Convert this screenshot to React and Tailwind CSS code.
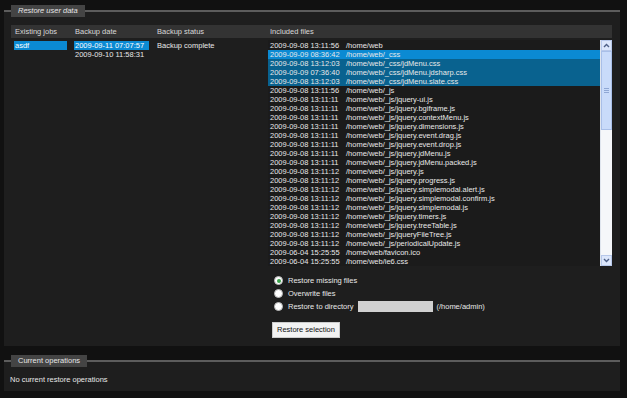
import React from "react";

const files = [
  ["2009-09-08 13:11:56", "/home/web"],
  ["2009-09-09 08:36:42", "/home/web/_css"],
  ["2009-09-08 13:12:03", "/home/web/_css/jdMenu.css"],
  ["2009-09-09 07:36:40", "/home/web/_css/jdMenu.jdsharp.css"],
  ["2009-09-08 13:12:03", "/home/web/_css/jdMenu.slate.css"],
  ["2009-09-08 13:11:56", "/home/web/_js"],
  ["2009-09-08 13:11:11", "/home/web/_js/jquery-ui.js"],
  ["2009-09-08 13:11:11", "/home/web/_js/jquery.bgiframe.js"],
  ["2009-09-08 13:11:11", "/home/web/_js/jquery.contextMenu.js"],
  ["2009-09-08 13:11:11", "/home/web/_js/jquery.dimensions.js"],
  ["2009-09-08 13:11:11", "/home/web/_js/jquery.event.drag.js"],
  ["2009-09-08 13:11:11", "/home/web/_js/jquery.event.drop.js"],
  ["2009-09-08 13:11:11", "/home/web/_js/jquery.jdMenu.js"],
  ["2009-09-08 13:11:11", "/home/web/_js/jquery.jdMenu.packed.js"],
  ["2009-09-08 13:11:12", "/home/web/_js/jquery.js"],
  ["2009-09-08 13:11:12", "/home/web/_js/jquery.progress.js"],
  ["2009-09-08 13:11:12", "/home/web/_js/jquery.simplemodal.alert.js"],
  ["2009-09-08 13:11:12", "/home/web/_js/jquery.simplemodal.confirm.js"],
  ["2009-09-08 13:11:12", "/home/web/_js/jquery.simplemodal.js"],
  ["2009-09-08 13:11:12", "/home/web/_js/jquery.timers.js"],
  ["2009-09-08 13:11:12", "/home/web/_js/jquery.treeTable.js"],
  ["2009-09-08 13:11:12", "/home/web/_js/jqueryFileTree.js"],
  ["2009-09-08 13:11:12", "/home/web/_js/periodicalUpdate.js"],
  ["2009-06-04 15:25:55", "/home/web/favicon.ico"],
  ["2009-06-04 15:25:55", "/home/web/ie6.css"],
];

const Legend = ({ title, italic }) => (
  <div className="flex items-center h-[12px] bg-[linear-gradient(to_bottom,transparent_7px,#1e1e1e_7px)]">
    <div className="w-[7px] h-[2px] bg-[#5c5c5c]" />
    <div
      className={`h-[12px] px-[7px] bg-[#444] text-[#e6e6e6] leading-[12px] ${italic ? "italic" : ""}`}
    >
      {title}
    </div>
    <div className="flex-1 h-[2px] bg-[#5c5c5c]" />
  </div>
);

const Radio = ({ checked, children }) => (
  <div className="flex items-center h-[13px]">
    <span className="w-[9px] h-[9px] rounded-full bg-white border border-[#b8b8b8] flex items-center justify-center ml-[6px] mr-[5px]">
      {checked && <span className="w-[4px] h-[4px] rounded-full bg-[#3aa24a]" />}
    </span>
    {children}
  </div>
);

const Arrow = ({ up }) => (
  <div className="h-[11px] flex items-center justify-center bg-[#dbe6fb] border border-[#b7c8ea]">
    <svg width="7" height="5" viewBox="0 0 7 5">
      <path
        d={up ? "M1 4 L3.5 1.5 L6 4" : "M1 1 L3.5 3.5 L6 1"}
        fill="none"
        stroke="#4d5f86"
        strokeWidth="1.4"
      />
    </svg>
  </div>
);

export default function App() {
  return (
    <div
      className="w-[627px] h-[398px] bg-[#111] pt-[5px] text-[7.5px] text-[#e8e8e8]"
      style={{ fontFamily: "'Liberation Sans', Arial, sans-serif" }}
    >
      <div className="ml-[4px] w-[616px]">
        <Legend title="Restore user data" italic />
        <div className="bg-[#1e1e1e] h-[329px] pt-[8px] pl-[7px] pr-[8px]">
          <div className="flex h-[13px] bg-[#333] text-[#d8d8d8] leading-[13px]">
            <div className="w-[60px] pl-[4px]">Existing jobs</div>
            <div className="w-[82px] pl-[4px]">Backup date</div>
            <div className="w-[113px] pl-[4px]">Backup status</div>
            <div className="flex-1 pl-[4px]">Included files</div>
          </div>
          <div className="flex pt-[2px] leading-[9px]">
            <div className="w-[60px] pl-[3px] pt-[1px]">
              <div className="w-[53px] pl-[1px] bg-[#0b8ad3] text-white">asdf</div>
            </div>
            <div className="w-[82px] pl-[3px] pt-[1px]">
              <div className="w-[75px] pl-[1px] bg-[#0b8ad3] text-white">2009-09-11 07:07:57</div>
              <div className="pl-[1px]">2009-09-10 11:58:31</div>
            </div>
            <div className="w-[113px] pl-[4px] pt-[1px]">Backup complete</div>
            <div className="flex-1 pl-[2px]">
              <div className="flex h-[226px] bg-[#1b1b1b]">
                <div className="flex-1 pt-[1px]">
                  {files.map(([d, p], i) => (
                    <div
                      key={i}
                      className={`flex h-[9px] ${
                        i === 1 ? "bg-[#0b8ad3]" : i > 1 && i < 5 ? "bg-[#09628f]" : ""
                      }`}
                    >
                      <span className="w-[78px] pl-[2px]">{d}</span>
                      <span>{p}</span>
                    </div>
                  ))}
                </div>
                <div className="w-[12px] flex flex-col bg-[#f5f7fa] border-l border-[#dfe5ee]">
                  <Arrow up />
                  <div className="h-[79px] bg-[#c9dbfa] border border-[#a9bfe8] flex items-center justify-center">
                    <div className="w-[5px] flex flex-col gap-[1px]">
                      <div className="h-[1px] bg-[#8fa7d4]" />
                      <div className="h-[1px] bg-[#8fa7d4]" />
                      <div className="h-[1px] bg-[#8fa7d4]" />
                    </div>
                  </div>
                  <div className="flex-1" />
                  <Arrow />
                </div>
              </div>
              <div className="pt-[8px]">
                <Radio checked>Restore missing files</Radio>
                <Radio>Overwrite files</Radio>
                <Radio>
                  <span>Restore to directory</span>
                  <span className="w-[75px] h-[11px] bg-[#d0d0d0] ml-[5px] mr-[3px]" />
                  <span>(/home/admin)</span>
                </Radio>
              </div>
              <div className="pt-[9px] pl-[4px]">
                <button className="h-[16px] px-[4px] bg-[#f2f2f2] text-[#111] border border-[#ccc] leading-[14px]">
                  Restore selection
                </button>
              </div>
            </div>
          </div>
        </div>
        <div className="h-[9px]" />
        <Legend title="Current operations" />
        <div className="bg-[#1e1e1e] h-[24px] pl-[6px] pt-[8px] leading-[9px]">
          No current restore operations
        </div>
      </div>
    </div>
  );
}
